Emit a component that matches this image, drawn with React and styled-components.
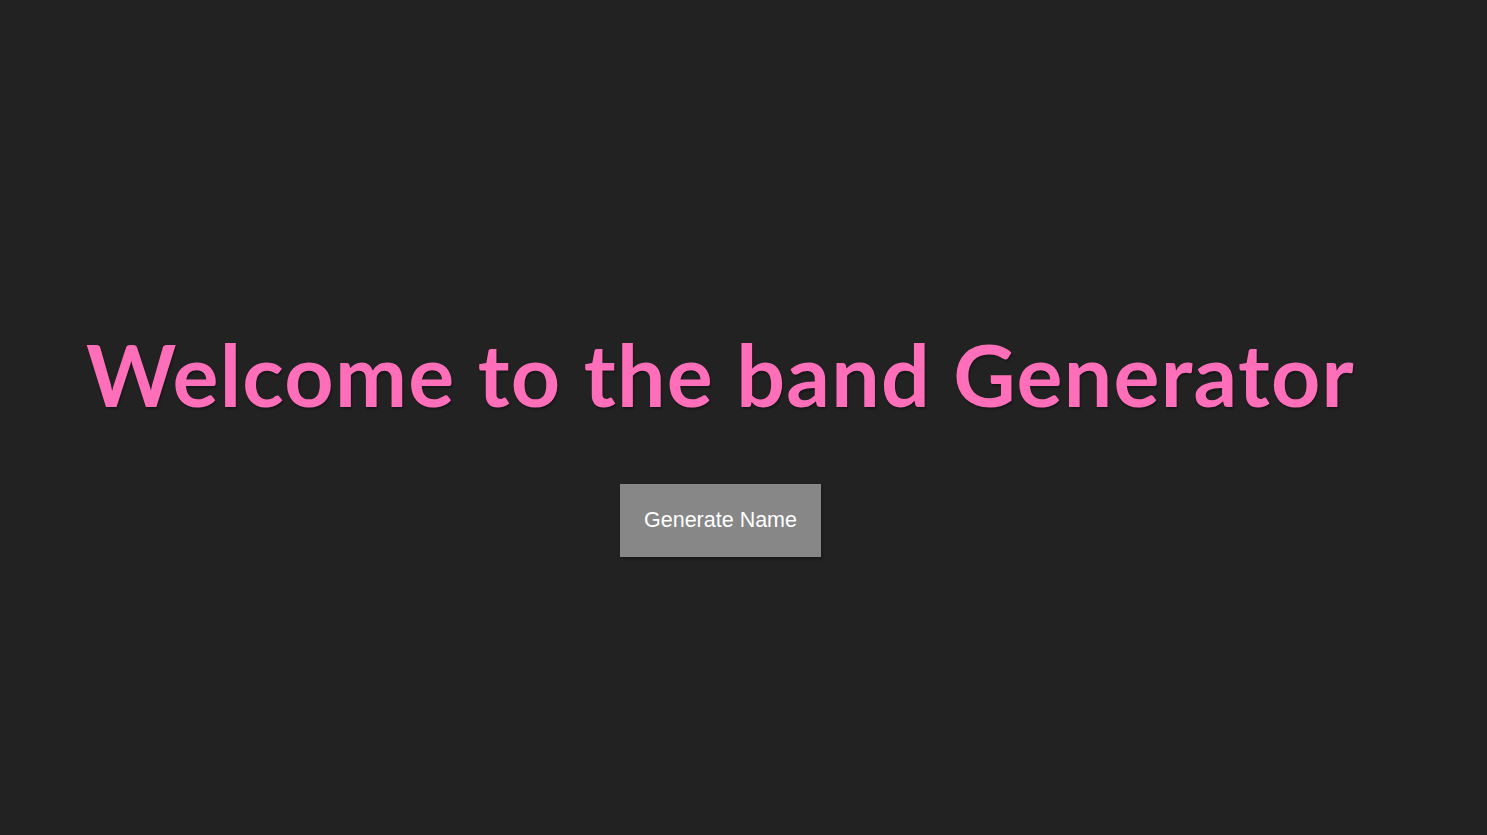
import styled, { createGlobalStyle } from "styled-components";

const GlobalStyle = createGlobalStyle`
  html, body {
    margin: 0;
    padding: 0;
    background: #222222;
  }
`;

const Page = styled.main`
  min-height: 100vh;
  box-sizing: border-box;
  padding: 322px 46px 0 0;
  display: flex;
  flex-direction: column;
  align-items: center;
`;

const Title = styled.h1`
  margin: 0;
  font-family: Lato, "Noto Sans", sans-serif;
  font-weight: 700;
  font-size: 86px;
  letter-spacing: 1.3px;
  line-height: 1.2;
  color: #ff6eb9;
  text-shadow: 1px 2px 2px rgba(0, 0, 0, 0.35);
`;

const GenerateButton = styled.button`
  margin-top: 59px;
  width: 201px;
  height: 73px;
  border: none;
  background: #878787;
  color: #ffffff;
  font-family: "Liberation Sans", Arial, sans-serif;
  font-size: 21.5px;
  cursor: pointer;
  box-shadow: 1px 2px 3px rgba(0, 0, 0, 0.3);
`;

const App = () => {
  return (
    <>
      <GlobalStyle />
      <Page>
        <Title>Welcome to the band Generator</Title>
        <GenerateButton>Generate Name</GenerateButton>
      </Page>
    </>
  );
};

export default App;
